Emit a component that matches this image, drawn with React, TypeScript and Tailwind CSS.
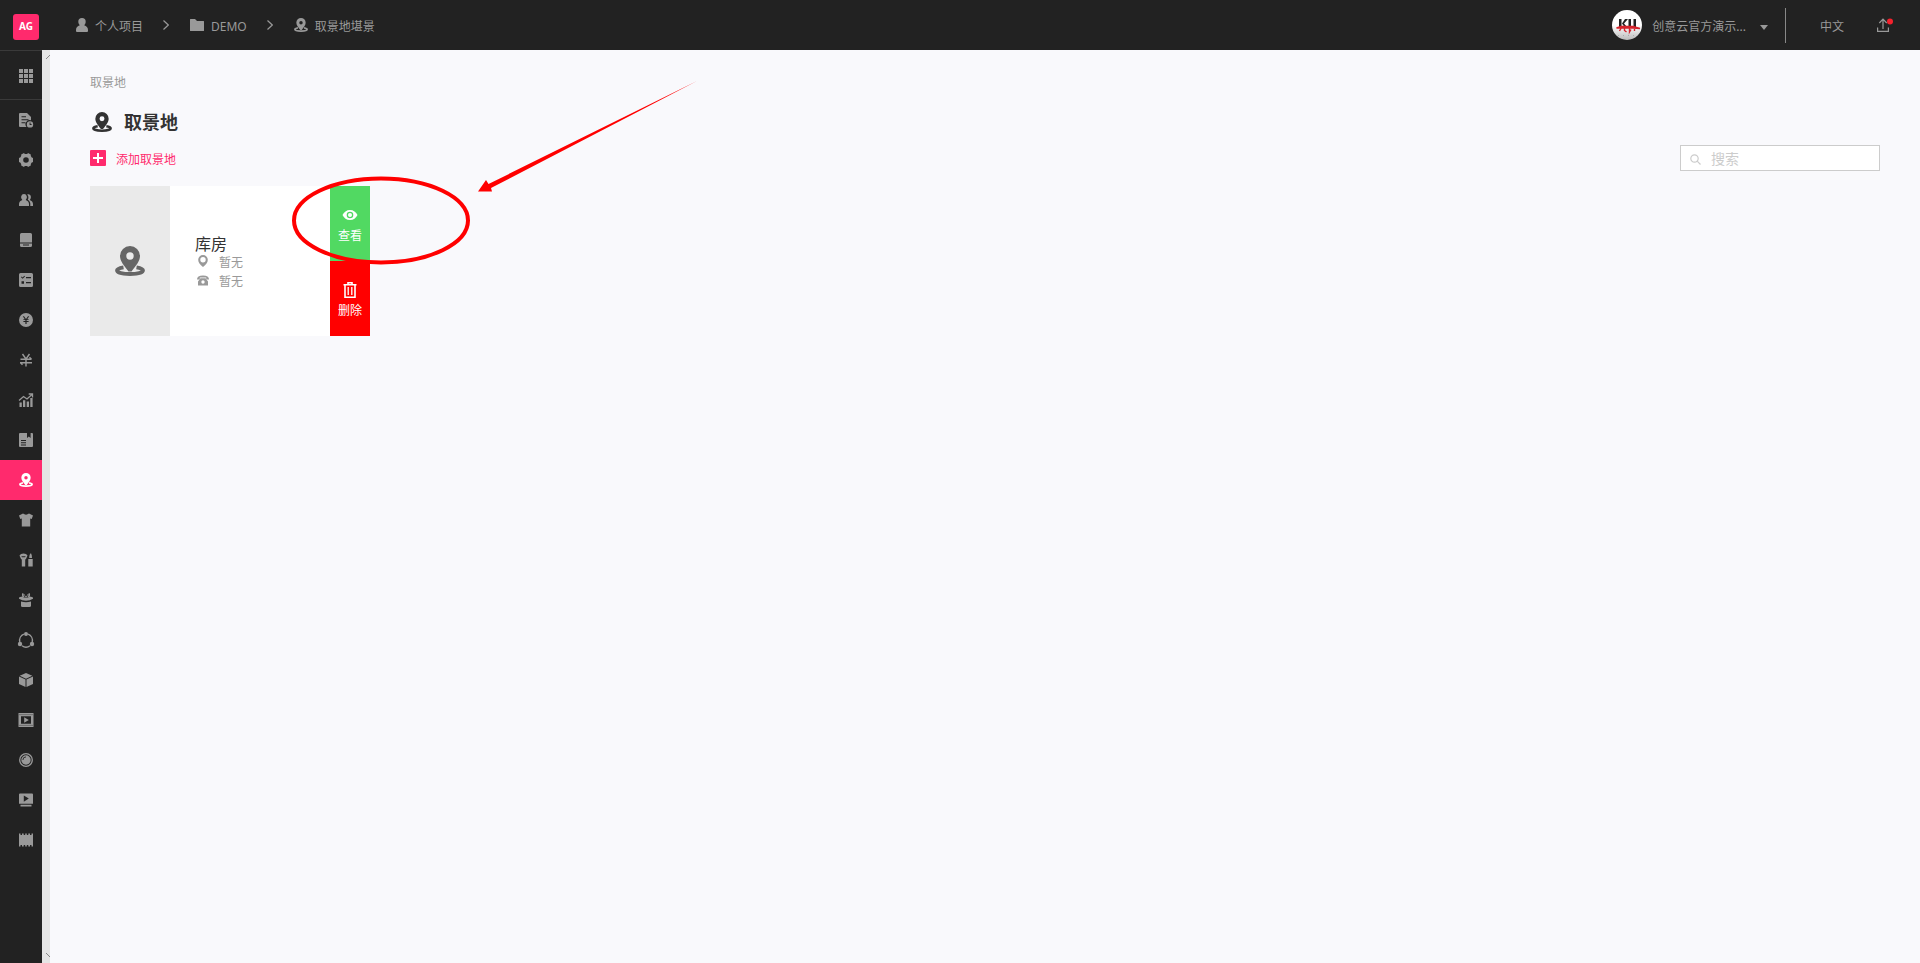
import React from 'react';

type IconProps = { className?: string };

function PinBaseIcon({ className = 'size-3.5' }: IconProps) {
  return (
    <svg viewBox="0 0 30 30" className={className} fill="currentColor" aria-hidden="true">
      <path fillRule="evenodd" d="M15 0a10 10 0 0 1 10 10c0 5-4 9.500-8.500 15.500h-3C9 19.500 5 15 5 10A10 10 0 0 1 15 0Zm0 6.300a3.700 3.700 0 1 0 0 7.400 3.700 3.700 0 0 0 0-7.400Z" />
      <path d="M8.500 21.300c-4 .7-6.500 1.700-6.500 3C2 26.500 8 28 15 28s13-1.500 13-3.700c0-1.300-2.500-2.300-6.500-3" fill="none" stroke="currentColor" strokeWidth="3.800" />
    </svg>
  );
}

function UserIcon() {
  return (
    <svg viewBox="0 0 12 14" className="h-3.5 w-3" fill="currentColor" aria-hidden="true">
      <path d="M6 0a3.700 3.700 0 0 1 3.700 3.700c0 1.600-.7 2.700-1.500 3.500C10.500 8 12 9.500 12 12v1q0 1-1 1H1q-1 0-1-1v-1c0-2.500 1.500-4 3.800-4.800-.8-.8-1.500-1.900-1.500-3.500A3.700 3.700 0 0 1 6 0Z" />
    </svg>
  );
}

function FolderIcon() {
  return (
    <svg viewBox="0 0 14 12" className="h-3 w-3.5" fill="currentColor" aria-hidden="true">
      <path d="M.5 0H5l2 2h6.500q.5 0 .5.500v9q0 .5-.5.500H.500Q0 12 0 11.500V.500Q0 0 .5 0Z" />
    </svg>
  );
}

function Chevron() {
  return (
    <svg viewBox="0 0 6 10" className="h-2.5 w-1.5" fill="none" stroke="currentColor" strokeWidth="1.200" aria-hidden="true">
      <path d="M.5.500 5.300 5 .5 9.500" />
    </svg>
  );
}

const sideIcons: { label: string; art: React.ReactNode }[] = [
  {
    label: '通告',
    art: (
      <>
        <path fillRule="evenodd" d="M1 0h7l4 4v3.300a4.200 4.200 0 0 0-4.500 6.700H1q-1 0-1-1V1q0-1 1-1Zm1.500 3.200v1.100H7V3.200Zm0 3v1.100h7V6.200Zm0 3v1.100h4V9.200Z" />
        <path fillRule="evenodd" d="M11 8.200a3.200 3.200 0 1 1 0 6.400 3.200 3.200 0 0 1 0-6.400Zm-.4 1.400v2.400h2v-.9h-1.100V9.600Z" />
      </>
    ),
  },
  {
    label: '设置',
    art: (
      <path fillRule="evenodd" d="m5 0 .8.900h2.400L9 0l2.800 1.500v1.300l.7 1.400 1.500.8v4l-1.500.8-.7 1.400v1.300L9 14l-.8-.9H5.800L5 14l-2.800-1.500v-1.300L1.500 9.800 0 9V5l1.500-.8.700-1.400V1.500ZM7 4.200a2.800 2.800 0 1 0 0 5.600 2.800 2.800 0 0 0 0-5.600Z" />
    ),
  },
  {
    label: '成员',
    art: (
      <>
        <path d="M5 1a2.900 3.300 0 0 1 1.700 6c2 .7 3.300 2 3.300 4v2H0v-2c0-2 1.300-3.300 3.300-4A2.900 3.300 0 0 1 5 1Z" />
        <path d="M8.200 1.500C12 .2 13 5 10.700 7c2 .7 3.300 2 3.300 4v2h-2.700v-2.200c0-1.900-1-3.200-2.500-4.100 1-1.500.9-3.700-.6-5.200Z" />
      </>
    ),
  },
  {
    label: '剧本',
    art: <path fillRule="evenodd" d="M2.500 0h9Q13 0 13 1.500V9.500H1v-8Q1 0 2.500 0ZM1 10.500h12v2q0 1.500-1.500 1.500h-9Q1 14 1 12.500Zm3 1v1h6v-1Z" />,
  },
  {
    label: '任务',
    art: (
      <path fillRule="evenodd" d="M1.500 0h11Q14 0 14 1.500v11q0 1.500-1.500 1.500h-11Q0 14 0 12.500v-11Q0 0 1.500 0ZM2 4.200l1.600 1.600L6 3.400l-.7-.7-1.700 1.700-.9-.9Zm5-.2v1.200h5V4ZM2.500 8.300v2.500H5V8.300ZM7 9v1.200h5V9Z" />
    ),
  },
  {
    label: '预算',
    art: (
      <path fillRule="evenodd" d="M7 0a7 7 0 1 1 0 14A7 7 0 0 1 7 0ZM3.800 3.200l2 3H4.400v.9h2v.9h-2v.9h2V11h1.200V8.900h2V8h-2v-.9h2v-.9H8.200l2-3H9L7 6.100l-2-2.900Z" />
    ),
  },
  {
    label: '费用',
    art: (
      <path d="M3.500 1 7 6l3.500-5M7 6v7.500M1.500 6.300h11M1 9.800h12M10.500 4.300l2 2M3.500 11.800l-2-2" fill="none" stroke="currentColor" strokeWidth="1.400" />
    ),
  },
  {
    label: '统计',
    art: (
      <>
        <path d="M.500 9.500h2.300V14H.500ZM4 7.300h2.300V14H4ZM7.700 8.500H10V14H7.700ZM11.300 5h2.300v9h-2.300Z" />
        <path d="m0 7.500 4.500-4 3.500 2.500 5-4.500M9.700 1h3.800v3.500" fill="none" stroke="currentColor" strokeWidth="1.300" />
      </>
    ),
  },
  {
    label: '文档',
    art: (
      <path fillRule="evenodd" d="M1 0h7v5l1.800-1.400L11.600 5V0H13q1 0 1 1v12q0 1-1 1H1q-1 0-1-1V1q0-1 1-1Zm1 7v1h5V7Zm0 2.300v1h5v-1Zm0 2.300v1h5v-1Z" />
    ),
  },
  { label: '取景地', art: null },
  {
    label: '服装',
    art: <path d="M4 .500Q7 2.800 10 .500L14 2.500l-1.300 3.500-1.500-.4v7.900H2.800V5.600L1.300 6 0 2.500Z" />,
  },
  {
    label: '化妆',
    art: (
      <>
        <path fillRule="evenodd" d="M.500 2.500Q1.500.500 4.500.500t4 2L7 6 6.200 6.500v7H2.800v-7L2 6ZM2.300 3.300l.7 1h3l.7-1Z" />
        <path d="M10.200 5Q10.300 1 12 .200q1 1.500 1 4.800Zm-.9 1h4.400v7.500H9.300Z" />
      </>
    ),
  },
  {
    label: '道具',
    art: (
      <>
        <path d="M3.300 0Q6 .5 6.700 3.500h.6Q8 .5 10.700 0q1.300 2.500-.5 4.500H3.800Q2 2.500 3.300 0Z" />
        <path d="M0 4.500Q2 3.600 4 3.600l.8 1.500h4.400l.8-1.500q2 0 4 .9v1.300Q11 7.800 7 7.800T0 5.800Z" />
        <path d="M4.800 1.500 5.600 4M9.200 1.500 8.400 4" stroke="#222" strokeWidth=".8" />
        <path d="M2 8.500Q7 9.900 12 8.500V13q-.2 1-1.500 1h-7Q2 14 2 13Z" />
      </>
    ),
  },
  {
    label: '流程',
    art: (
      <>
        <path d="M4.900 1.200A6.700 6.700 0 0 0 .8 9M9.100 1.200A6.700 6.700 0 0 1 13.200 9M3 12.700a6.700 6.700 0 0 0 8 0" fill="none" stroke="currentColor" strokeWidth="1.400" />
        <circle cx="7" cy="1" r="2" />
        <circle cx="1" cy="11" r="2.200" />
        <circle cx="13" cy="11" r="2.200" />
      </>
    ),
  },
  {
    label: '素材',
    art: <path d="m7 0 6.300 2.800L7 5.800.7 2.800ZM0 3.500l6.500 3V14L0 11Zm14 0-6.500 3V14L14 11Z" />,
  },
  {
    label: '样片',
    art: (
      <>
        <path fillRule="evenodd" d="M-.5 0h15v14h-15ZM2 3.300v7.400h10V3.300Z" />
        <path d="M.500 1.600h13M.500 12.400h13" stroke="#222" strokeWidth=".7" strokeDasharray="1 1" />
        <path d="M5.200 4.300 9.800 7l-4.600 2.700Z" />
      </>
    ),
  },
  {
    label: '镜头',
    art: (
      <>
        <circle cx="7" cy="7" r="6.300" fill="none" stroke="currentColor" strokeWidth="1.300" />
        <circle cx="7" cy="7" r="4.700" />
        <path d="M3.900 7A3.100 3.100 0 0 1 7 3.900" fill="none" stroke="#222" strokeWidth=".9" />
      </>
    ),
  },
  {
    label: '播放',
    art: <path fillRule="evenodd" d="M1 .500h12q1 0 1 1v9.300H0V1.500q0-1 1-1Zm3.800 2v6.200L9.800 5.600ZM1.500 11.700h11v1.900h-11Z" />,
  },
  {
    label: '影片',
    art: (
      <path d="M0 .500h1.500v1.500h1.500V.500h1.700v1.500h1.500V.500h1.600v1.500h1.500V.500h1.700v1.500h1.500V.500H14v13h-1.500V12h-1.500v1.500H9.300V12H7.800v1.500H6.200V12H4.700v1.500H3V12H1.500v1.500H0Z" />
    ),
  },
];

function Sidebar() {
  return (
    <nav className="flex w-[42px] shrink-0 flex-col bg-[#222] text-[#999]">
      <button aria-label="应用" className="flex h-[50px] items-center justify-center border-y border-[#3a3a3a] pt-0.5 pl-2.5">
        <svg viewBox="0 0 14 14" className="size-3.5" fill="currentColor" aria-hidden="true">
          <path d="M0 0h4v4H0ZM5 0h4v4H5ZM10 0h4v4h-4ZM0 5h4v4H0ZM5 5h4v4H5ZM10 5h4v4h-4ZM0 10h4v4H0ZM5 10h4v4H5ZM10 10h4v4h-4Z" />
        </svg>
      </button>
      {sideIcons.map((item) =>
        item.art ? (
          <a key={item.label} href="#" aria-label={item.label} className="flex h-10 items-center justify-center pl-2.5">
            <svg viewBox="0 0 14 14" className="size-3.5 overflow-visible" fill="currentColor" aria-hidden="true">
              {item.art}
            </svg>
          </a>
        ) : (
          <a key={item.label} href="#" aria-label={item.label} className="flex h-10 items-center justify-center bg-[#ff2a6d] pl-2.5 text-white">
            <PinBaseIcon />
          </a>
        )
      )}
    </nav>
  );
}

function Header() {
  return (
    <header className="flex h-[50px] shrink-0 items-center bg-[#222] pr-[27px] pl-[13px] text-xs text-[#999]">
      <a href="#" className="mt-1 flex size-[26px] items-center justify-center rounded-[3px] bg-[#ff2a6d] text-[10px] font-bold text-white">
        AG
      </a>
      <div className="ml-[37px] flex items-center">
        <a href="#" className="flex items-center gap-[7px]">
          <UserIcon />
          <span className="pt-1">个人项目</span>
        </a>
        <span className="mr-[21px] ml-5">
          <Chevron />
        </span>
        <a href="#" className="flex items-center gap-[7px]">
          <FolderIcon />
          <span className="pt-1">DEMO</span>
        </a>
        <span className="mr-[21px] ml-5">
          <Chevron />
        </span>
        <a href="#" className="flex items-center gap-[7px]">
          <PinBaseIcon />
          <span className="pt-1">取景地堪景</span>
        </a>
      </div>
      <div className="ml-auto flex items-center">
        <button className="flex items-center">
          <svg viewBox="0 0 30 30" className="size-[30px]" aria-hidden="true">
            <defs>
              <linearGradient id="avatar" x1="0" y1="0" x2="0" y2="1">
                <stop offset="0.5" stopColor="#fff" />
                <stop offset="1" stopColor="#bbb" />
              </linearGradient>
            </defs>
            <circle cx="15" cy="15" r="15" fill="url(#avatar)" />
            <path d="M7 9h2.500v8H7ZM13 9h3l-4 4.500 3 3.500h-2.500L10 13.500ZM16.500 9H19v8h-2.500ZM21.500 9H24v9h-2.500Z" fill="#222" />
            <path d="M4.500 18 9 16.500h12l7 2-7-.5H9ZM9.500 17.500l-2 3.500M12.500 18v2.500l2 1.500M17.500 18v4l1.500-2.500M22.500 18v3" fill="none" stroke="#d5222b" strokeWidth="1.400" />
            <path d="M6 25.500h18" stroke="#aaa" strokeDasharray="1 4" />
          </svg>
          <span className="ml-2.5 pt-1">创意云官方演示...</span>
          <svg viewBox="0 0 8 5" className="mt-1 ml-3.5 h-[5px] w-2" fill="currentColor" aria-hidden="true">
            <path d="M0 0h8L4 5Z" />
          </svg>
        </button>
        <span className="ml-[17px] h-[35px] w-px bg-[#888]" />
        <button className="ml-[34px] pt-1">中文</button>
        <button aria-label="上传" className="ml-[33px]">
          <svg viewBox="0 0 16 14" className="h-3.5 w-4 overflow-visible" fill="none" stroke="currentColor" strokeWidth="1.200" aria-hidden="true">
            <path d="M.6 9.500v3.800h10.800V9.500M6 11V1.500M2.300 5 6 1.200 9.700 5" />
            <circle cx="13" cy="3.500" r="3" fill="#f5222d" stroke="none" />
          </svg>
        </button>
      </div>
    </header>
  );
}

function LocationCard() {
  return (
    <article className="flex h-[150px] w-[280px] bg-white">
      <div className="flex w-20 items-center justify-center bg-[#eaeaea] text-[#666]">
        <PinBaseIcon className="size-[30px]" />
      </div>
      <div className="flex flex-1 flex-col justify-center pt-[3px] pl-[25px] text-xs text-[#999]">
        <h2 className="text-base leading-5 text-[#333]">库房</h2>
        <p className="flex h-[19px] items-center pl-[3px]">
          <svg viewBox="0 0 10 12" className="mb-1 h-3 w-2.5" fill="currentColor" aria-hidden="true">
            <path fillRule="evenodd" d="M5 0a4.800 4.800 0 0 1 4.800 4.800C9.800 7.500 8 9.500 5 12 2 9.500.2 7.500.2 4.800A4.800 4.800 0 0 1 5 0Zm0 2a2.700 2.700 0 1 0 0 5.400A2.700 2.700 0 0 0 5 2Z" />
          </svg>
          <span className="ml-[11px]">暂无</span>
        </p>
        <p className="flex h-[19px] items-center pl-0.5">
          <svg viewBox="0 0 12 11" className="mb-1 h-[11px] w-3" fill="currentColor" aria-hidden="true">
            <path d="M0 4.500Q0 .5 6 .500t6 4H9.200V2.500H2.800v2Z" />
            <path fillRule="evenodd" d="M3.500 3.300h5L11 6.500v4H1v-4ZM6 5.300a1.700 1.700 0 1 0 0 3.400 1.700 1.700 0 0 0 0-3.400Z" />
          </svg>
          <span className="ml-2.5">暂无</span>
        </p>
      </div>
      <div className="flex w-10 flex-col text-xs text-white">
        <button className="flex flex-1 flex-col items-center justify-center gap-[5px] bg-[#51d962] pt-[3px]">
          <svg viewBox="0 0 16 16" className="size-4" fill="currentColor" aria-hidden="true">
            <path fillRule="evenodd" d="M8 3c3.500 0 6 2 7.500 5-1.500 3-4 5-7.500 5S2 11 .5 8C2 5 4.500 3 8 3Zm0 1.700a3.300 3.300 0 1 0 0 6.600 3.300 3.300 0 0 0 0-6.600Z" />
            <circle cx="8" cy="8" r="2" />
          </svg>
          <span>查看</span>
        </button>
        <button className="flex flex-1 flex-col items-center justify-center gap-[5px] bg-[#ff0000] pt-[3px]">
          <svg viewBox="0 0 16 16" className="size-4" fill="none" stroke="currentColor" strokeWidth="1.600" aria-hidden="true">
            <path d="M1.500 2.700h13M6 2V.800h4V2M3 3v12.200h10V3" />
            <path d="M6.200 5v8M9.800 5v8" strokeWidth="1.300" />
          </svg>
          <span>删除</span>
        </button>
      </div>
    </article>
  );
}

// hand-drawn markup over the card: ring round the view button, arrow pointing at it
function Annotation() {
  return (
    <svg viewBox="0 0 420 200" className="pointer-events-none absolute top-6 left-[240px] h-[200px] w-[420px]" fill="#ff0000" aria-hidden="true">
      <ellipse cx="91" cy="146.500" rx="87" ry="42" fill="none" stroke="#ff0000" strokeWidth="4" />
      <path d="m188 117.500 8-11.500 2.500 4L407 7 201 114l1 3.500Z" />
    </svg>
  );
}

export default function App() {
  return (
    <div className="flex min-h-screen flex-col bg-[#f9f9fc] font-['Noto_Sans','Noto_Sans_CJK_SC',sans-serif]">
      <Header />
      <div className="flex flex-1">
        <Sidebar />
        <div className="flex w-2 shrink-0 flex-col items-end justify-between bg-[#e5e5e5] pt-[5px] pb-[6px] text-[#888]">
          <svg viewBox="0 0 4 4" className="size-1" stroke="currentColor" aria-hidden="true">
            <path d="M0 4 4 0" />
          </svg>
          <svg viewBox="0 0 4 4" className="size-1" stroke="currentColor" aria-hidden="true">
            <path d="m0 0 4 4" />
          </svg>
        </div>
        <main className="relative flex-1 px-10 pt-[25px]">
          <p className="text-xs leading-4 text-[#999]">取景地</p>
          <h1 className="mt-[19px] flex h-6 items-center gap-3 pl-0.5 text-lg font-bold text-[#333]">
            <PinBaseIcon className="size-5" />
            取景地
          </h1>
          <div className="mt-[11px] flex h-[26px] items-center justify-between">
            <button className="flex items-center gap-2.5 text-xs text-[#ff2a6d]">
              <svg viewBox="0 0 16 16" className="size-4" aria-hidden="true">
                <rect width="16" height="16" rx="1" fill="currentColor" />
                <path d="M8 3v10M3 8h10" stroke="#fff" strokeWidth="2" />
              </svg>
              <span className="pt-1">添加取景地</span>
            </button>
            <label className="flex h-[26px] w-[200px] items-center border border-[#ccc] bg-white pl-[9px] text-[#ccc]">
              <svg viewBox="0 0 11 11" className="mt-0.5 size-[11px] shrink-0" fill="none" stroke="currentColor" strokeWidth="1.200" aria-hidden="true">
                <circle cx="4.500" cy="4.500" r="3.700" />
                <path d="m7.200 7.200 3.300 3.300" />
              </svg>
              <input type="text" placeholder="搜索" aria-label="搜索" className="ml-2.5 w-full min-w-0 pt-0.5 text-sm text-[#333] outline-none placeholder:text-[#ccc]" />
            </label>
          </div>
          <div className="mt-[15px]">
            <LocationCard />
          </div>
          <Annotation />
        </main>
      </div>
    </div>
  );
}
